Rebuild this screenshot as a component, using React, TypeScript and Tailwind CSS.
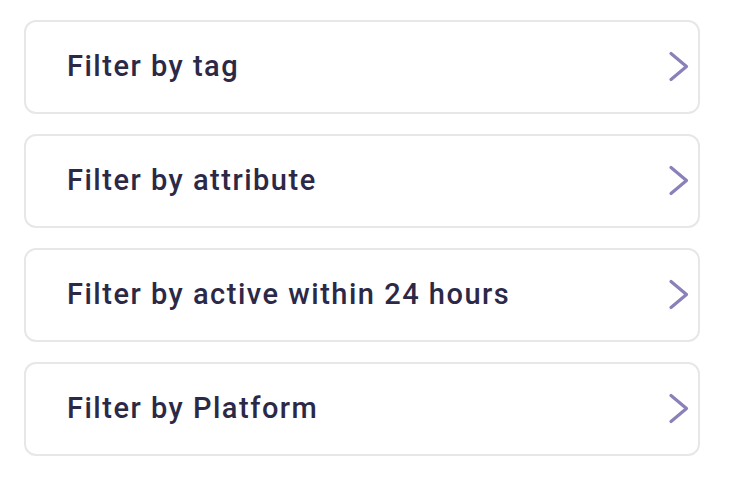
const filters = [
  'Filter by tag',
  'Filter by attribute',
  'Filter by active within 24 hours',
  'Filter by Platform',
];

function Chevron() {
  return (
    <svg width="24" height="32" viewBox="0 0 24 32" fill="none">
      <polyline
        points="5,2.5 20.5,15.5 5,28.5"
        stroke="#8b80b9"
        strokeWidth="3.2"
        strokeLinecap="round"
        strokeLinejoin="round"
      />
    </svg>
  );
}

export default function App() {
  return (
    <div
      className="flex h-[504px] w-[736px] flex-col gap-[20px] bg-white pl-[24px] pt-[20px]"
      style={{ fontFamily: 'Roboto, "Liberation Sans", sans-serif' }}
    >
      {filters.map(label => (
        <div
          key={label}
          className="flex h-[94px] w-[676px] items-center justify-between rounded-[12px] border-2 border-[#e7e7e7] pl-[41px] pr-[8px]"
        >
          <span className="text-[29px] font-medium tracking-[1.5px] text-[#2c2947]">{label}</span>
          <Chevron />
        </div>
      ))}
    </div>
  );
}
